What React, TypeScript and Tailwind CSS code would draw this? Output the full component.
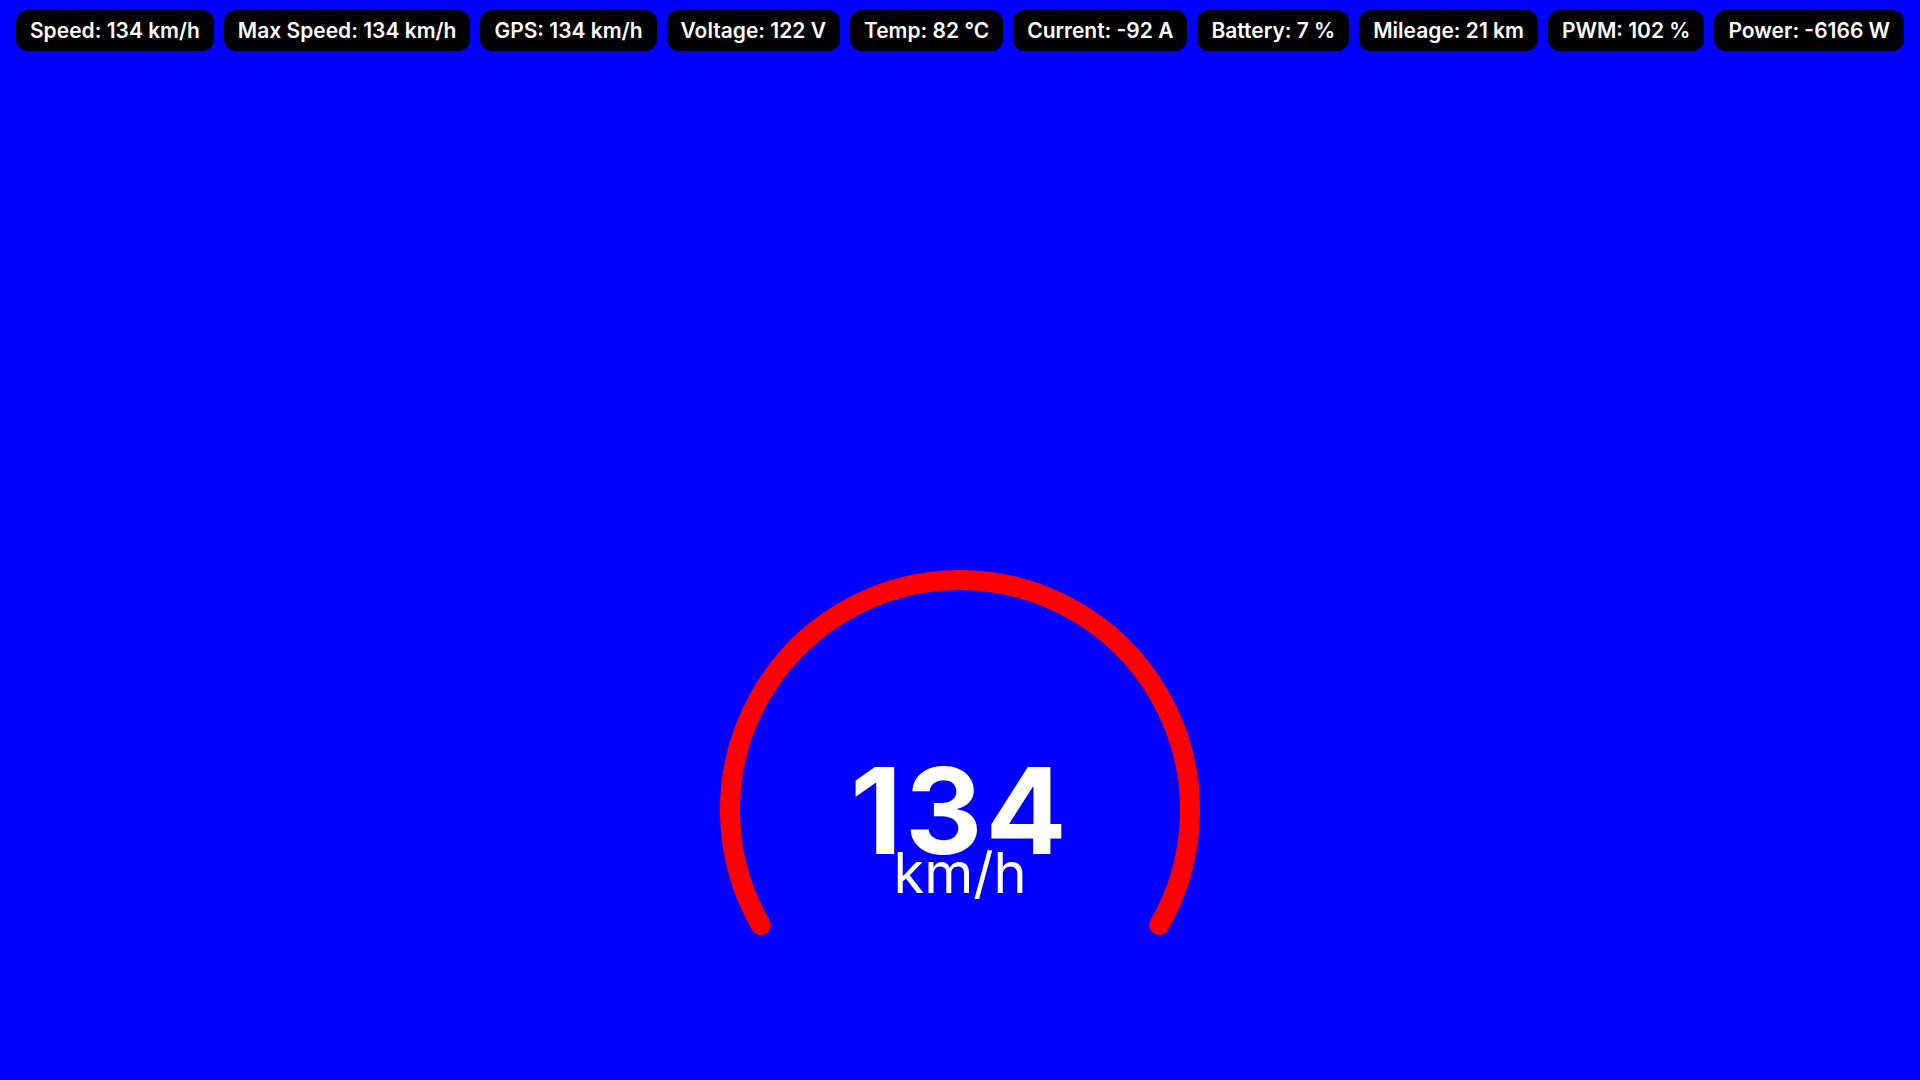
const stats = [
  'Speed: 134 km/h',
  'Max Speed: 134 km/h',
  'GPS: 134 km/h',
  'Voltage: 122 V',
  'Temp: 82 °C',
  'Current: -92 A',
  'Battery: 7 %',
  'Mileage: 21 km',
  'PWM: 102 %',
  'Power: -6166 W',
]

// arc from 210deg to -30deg (over the top), r=230 around (250,250)
const arcPath = () => {
  const r = 230
  const cx = 250
  const cy = 250
  const a0 = (150 * Math.PI) / 180
  const a1 = (30 * Math.PI) / 180
  const x0 = cx + r * Math.cos(a0)
  const y0 = cy + r * Math.sin(a0)
  const x1 = cx + r * Math.cos(a1)
  const y1 = cy + r * Math.sin(a1)
  return `M ${x0} ${y0} A ${r} ${r} 0 1 1 ${x1} ${y1}`
}

const App = () => {
  return (
    <div className="h-screen w-full overflow-hidden bg-[#0000ff] font-['Inter','Liberation_Sans',sans-serif]">
      <div className="flex justify-center gap-[10px] pt-[10px]">
        {stats.map(s => (
          <div
            key={s}
            className="flex h-[41px] items-center rounded-[12px] bg-black px-[14px] text-[21px] font-semibold text-white whitespace-nowrap">
            {s}
          </div>
        ))}
      </div>

      <div className="relative mx-auto mt-[509px] h-[500px] w-[500px]">
        <svg width="500" height="500" viewBox="0 0 500 500" className="block">
          <path d={arcPath()} fill="none" stroke="#ff0000" strokeWidth="20" strokeLinecap="round" />
        </svg>
        <div className="absolute inset-x-0 top-[191px] flex flex-col items-center text-white">
          <span className="text-[120px] font-bold leading-none tracking-[3px]">134</span>
          <span className="mt-[-26px] text-[56px] leading-none">km/h</span>
        </div>
      </div>
    </div>
  )
}

export default App
